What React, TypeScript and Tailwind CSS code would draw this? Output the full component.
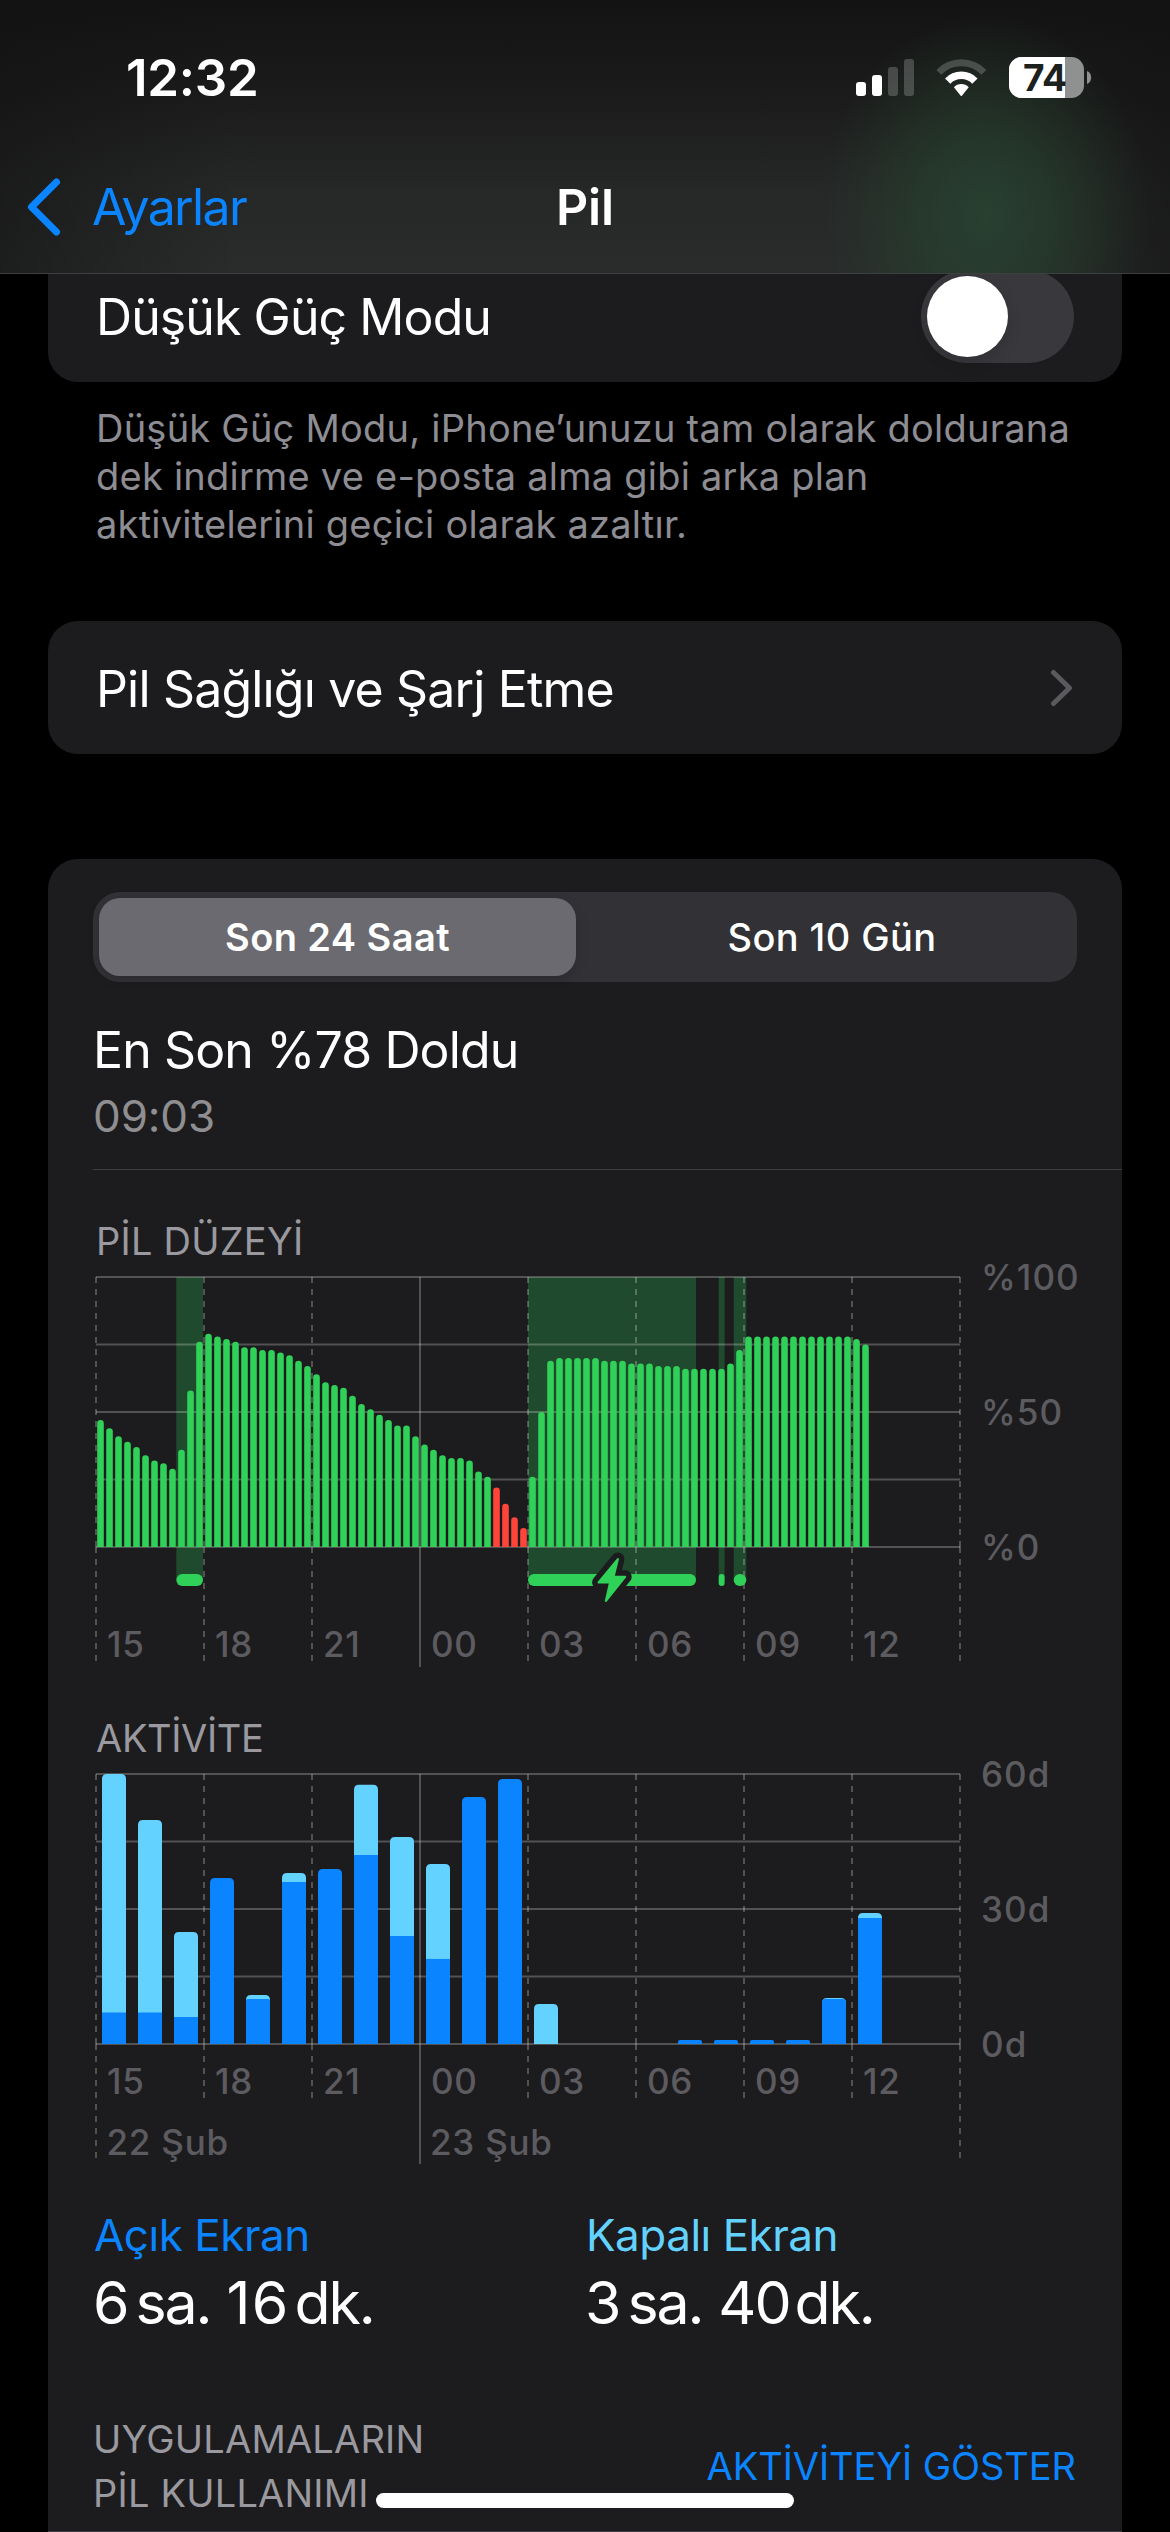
import type { ReactNode } from "react"

// Battery level per 15 minutes, starting at 15:00
const LEVELS = [
  47, 44, 41, 39, 37, 34, 32, 31, 29, 36, 58, 76,
  79, 78, 77, 76, 74, 74, 73, 73, 72, 71, 69, 67,
  64, 61, 60, 59, 56, 53, 51, 49, 47, 45, 45, 41,
  38, 36, 34, 33, 33, 32, 28, 26, 22, 16, 11, 7,
  26, 50, 69, 70, 70, 70, 70, 70, 69, 69, 69, 68,
  68, 68, 67, 67, 67, 66, 66, 66, 66, 66, 68, 73,
  78, 78, 78, 78, 78, 78, 78, 78, 78, 78, 78, 78,
  77, 75,
]
const LOW = { from: 44, to: 47 }

// Charging periods in chart pixels
const CHARGES = [
  { x: 128.3, w: 26.7 },
  { x: 480, w: 168 },
  { x: 670.7, w: 5.9 },
  { x: 685.7, w: 12.6 },
]

const BOLT = "M570 294 550.5 317.5H562L557.8 336 577.2 311.8H565.6z"

// Minutes per hour, starting at 15:00: [screen on, screen off]
const ACTIVITY = [
  [7, 53], [7, 42.8], [6, 18.9], [36.9, 0], [10, 0.9], [36, 2],
  [38.9, 0], [42, 15.6], [24, 22], [18.9, 21.1], [54.9, 0], [58.9, 0],
  [0, 8.9], [0, 0], [0, 0], [0, 0], [0.9, 0], [0.9, 0],
  [0.9, 0], [0.9, 0], [10, 0.2], [28, 1.1],
]

const HOURS = ["15", "18", "21", "00", "03", "06", "09", "12"]

const LEFT = 48
const TOP = 12
const PLOT_W = 864
const PLOT_H = 270
const BOTTOM = TOP + PLOT_H
const STEP = 108
const MIDNIGHT = 3

const LABEL = "fill-[#5c5b60] text-[35px] font-medium"

export default function App() {
  return (
    <div className="h-[2532px] w-[1170px] overflow-hidden bg-black font-['Inter','Noto_Sans',sans-serif] text-white">
      <Header />
      <main className="px-[48px]">
        <section className="-mt-[24px] flex h-[132px] items-center justify-between rounded-b-[30px] bg-[#1c1c1e] pr-[48px] pl-[48px]">
          <span className="pt-[2px] text-[50px] leading-[60px] tracking-[-0.0185em]">Düşük Güç Modu</span>
          <span className="mt-px flex h-[93px] w-[153px] items-center rounded-full bg-[#39383d] p-[6px]">
            <span className="size-[81px] rounded-full bg-white shadow-[0_6px_16px_rgba(0,0,0,0.15)]" />
          </span>
        </section>
        <p className="mt-[22px] pl-[48px] text-[38px] leading-[48px] tracking-[0.006em] whitespace-nowrap text-[#8d8d93]">
          Düşük Güç Modu, iPhone’unuzu tam olarak doldurana
          <br />
          dek indirme ve e-posta alma gibi arka plan
          <br />
          aktivitelerini geçici olarak azaltır.
        </p>

        <section className="mt-[73px] flex h-[133px] items-center justify-between rounded-[30px] bg-[#1c1c1e] pr-[49px] pl-[48px]">
          <span className="pt-[3px] text-[50px] leading-[60px] tracking-[-0.0165em]">Pil Sağlığı ve Şarj Etme</span>
          <svg className="h-[38px] w-[23px]" viewBox="0 0 23 38" fill="none">
            <path d="M3.5 3.5 19.5 19 3.5 34.5" stroke="#5a5a5e" strokeWidth="5" strokeLinecap="round" strokeLinejoin="round" />
          </svg>
        </section>

        <section className="mt-[105px] h-[1700px] rounded-t-[30px] bg-[#1c1c1e] pt-[33px]">
          <div className="mx-[45px] flex h-[90px] rounded-[27px] bg-[#323136] p-[6px] text-[38px] tracking-[0.0108em]">
            <div className="flex w-[477px] items-center justify-center rounded-[21px] bg-[#6b6a70] font-semibold shadow-[0_3px_12px_rgba(0,0,0,0.15)]">
              Son 24 Saat
            </div>
            <div className="flex flex-1 items-center justify-center pl-[17px] font-medium">Son 10 Gün</div>
          </div>
          <div className="mt-[38px] pl-[45px]">
            <h2 className="text-[50px] leading-[60px] tracking-[-0.0175em]">En Son %78 Doldu</h2>
            <p className="mt-[6px] text-[44px] leading-[60px] tracking-[-0.003em] text-[#8f8e90]">09:03</p>
          </div>
          <div className="mt-[23px] ml-[45px] h-px bg-[#3d3d41]" />

          <ChartTitle className="mt-[47px] tracking-[0.006em]">PİL DÜZEYİ</ChartTitle>
          <LevelChart />
          <ChartTitle className="mt-[37px] tracking-[-0.009em]">AKTİVİTE</ChartTitle>
          <ActivityChart />

          <div className="mt-[33px] grid grid-cols-[492px_1fr] pl-[46px]">
            <Total label="Açık Ekran" tone="text-[#0a84ff]" hours="6" minutes="16" digits="tracking-[0.02em]" />
            <Total label="Kapalı Ekran" tone="text-[#64d2ff]" hours="3" minutes="40" digits="tracking-[-0.035em]" />
          </div>

          <div className="mt-[74px] flex h-[120px] items-start justify-between border-b border-[#3d3d41] pr-[46px] pl-[45px] text-[38px] leading-[54px]">
            <p className="tracking-[0.0055em] text-[#9a999f]">
              UYGULAMALARIN
              <br />
              PİL KULLANIMI
            </p>
            <p className="mt-[27px] tracking-[-0.0018em] text-[#0a84ff]">AKTİVİTEYİ GÖSTER</p>
          </div>
        </section>
      </main>
      <div className="absolute top-[2493px] left-[376px] h-[15px] w-[418px] rounded-full bg-white" />
    </div>
  )
}

function Header() {
  return (
    <header className="relative z-10 h-[274px] border-b border-[#3e3f41] bg-[radial-gradient(165px_200px_at_985px_215px,rgba(40,68,49,0.85),rgba(38,64,46,0.6)_45%,rgba(30,50,36,0)_100%),linear-gradient(90deg,rgba(18,18,18,0.55),rgba(18,18,18,0)_20%,rgba(18,18,18,0)_84%,rgba(18,18,18,0.6)),linear-gradient(180deg,#131313,#1b1b1b_35%,#262727_70%,#2a2b2b)]">
      <div className="flex h-[142px] items-center justify-between pt-[14px] pr-[78px] pl-[126px]">
        <span className="text-[51px] leading-[60px] font-semibold tracking-[-0.005em]">12:32</span>
        <StatusIcons />
      </div>
      <div className="grid h-[131px] grid-cols-3 items-center pb-[2px] text-[50px] leading-[60px]">
        <div className="flex items-center pl-[26px] text-[#0a84ff]">
          <svg className="h-[60px] w-[36px]" viewBox="0 0 36 60" fill="none">
            <path d="M30.5 5 5.5 30 30.5 55" stroke="currentColor" strokeWidth="7" strokeLinecap="round" strokeLinejoin="round" />
          </svg>
          <span className="ml-[30px] tracking-[-0.0328em]">Ayarlar</span>
        </div>
        <h1 className="text-center font-semibold tracking-[-0.003em]">Pil</h1>
      </div>
    </header>
  )
}

function StatusIcons() {
  return (
    <svg className="h-[44px] w-[236px]" viewBox="856 56 236 44">
      <g fill="#fff">
        <rect x="856" y="82" width="10" height="14" rx="3" />
        <rect x="872" y="75" width="10" height="21" rx="3" />
        <rect x="888" y="67" width="10" height="29" rx="3" fillOpacity=".2" />
        <rect x="904" y="59" width="10" height="37" rx="3" fillOpacity=".2" />
      </g>
      <g transform="translate(961.3 94.2)">
        <path d="M-22.5-21.8A31.3 31.3 0 0 1 22.5-21.8" fill="none" stroke="#fff" strokeOpacity=".2" strokeWidth="7" />
        <path d="M-13.6-13.1A18.9 18.9 0 0 1 13.6-13.1" fill="none" stroke="#fff" strokeWidth="7.4" />
        <path d="M-7.4-6.9A10.2 10.2 0 0 1 7.4-6.9L.6 1.5Q0 2-.6 1.5Z" fill="#fff" />
      </g>
      <clipPath id="charge">
        <rect x="1009" y="57" width="75" height="41" rx="12.5" />
      </clipPath>
      <g clipPath="url(#charge)">
        <rect x="1009" y="57" width="75" height="41" fill="#8f9090" />
        <rect x="1009" y="57" width="56" height="41" fill="#fff" />
      </g>
      <path d="M1087 71c5.5 2 5.5 11 0 13z" fill="#8f9090" />
      <text x="1023" y="91" className="fill-[#1c211e] text-[37px] font-bold tracking-[-0.01em]">74</text>
    </svg>
  )
}

function ChartTitle({ className, children }: { className: string; children: ReactNode }) {
  return (
    <h3 className={`${className} pl-[48px] text-[38px] leading-[48px] text-[#9a999f]`}>{children}</h3>
  )
}

function Grid({
  hoursEnd,
  edgeEnd,
  solidEnd,
  yLabels,
}: {
  hoursEnd: number
  edgeEnd: number
  solidEnd: number
  yLabels: string[]
}) {
  return (
    <>
      <g stroke="#fff" strokeOpacity=".24" strokeWidth="2">
        {HOURS.concat("end").map((hour, i) => {
          const x = LEFT + i * STEP
          if (i === MIDNIGHT) return <path key={hour} d={`M${x} ${TOP}V${solidEnd}`} />
          const end = i === 0 || i === HOURS.length ? edgeEnd : hoursEnd
          return (
            <path key={hour} strokeDasharray="6 6" d={`M${x} ${TOP}V${BOTTOM}M${x} ${BOTTOM}V${end}`} />
          )
        })}
      </g>
      {yLabels.map((label, i) => (
        <text key={label} x={LEFT + PLOT_W + 21} y={TOP + 13 + i * 135} className={`${LABEL} tracking-[0.03em]`}>
          {label}
        </text>
      ))}
    </>
  )
}

function HorizontalLines() {
  return (
    <g stroke="#fff" strokeOpacity=".24" strokeWidth="2">
      {[0, 1, 2, 3, 4].map((i) => (
        <path key={i} d={`M${LEFT} ${TOP + i * 67.5}h${PLOT_W}`} />
      ))}
    </g>
  )
}

function HourLabels({ y }: { y: number }) {
  return (
    <>
      {HOURS.map((hour, i) => (
        <text key={hour} x={LEFT + i * STEP + 11} y={y} className={`${LABEL} tracking-[0.02em]`}>
          {hour}
        </text>
      ))}
    </>
  )
}

function LevelChart() {
  return (
    <svg className="block h-[412px] w-[1074px] overflow-visible" viewBox="0 0 1074 412">
      {CHARGES.map(({ x, w }) => (
        <rect key={x} x={x} y={TOP} width={w} height={303} fill="#30d158" fillOpacity=".26" />
      ))}
      <HorizontalLines />
      {LEVELS.map((level, i) => {
        const x = LEFT + 1.2 + i * 9
        const y = BOTTOM - level * 2.7
        const low = i >= LOW.from && i <= LOW.to
        return (
          <path
            key={i}
            d={`M${x} ${BOTTOM}V${y + 3.3}a3.3 3.3 0 0 1 6.6 0V${BOTTOM}z`}
            fill={low ? "#ff453a" : "#30d158"}
          />
        )
      })}
      <Grid hoursEnd={396} edgeEnd={396} solidEnd={402} yLabels={["%100", "%50", "%0"]} />
      {CHARGES.map(({ x, w }) => (
        <rect key={x} x={x} y={309} width={w} height={12} rx={Math.min(6, w / 2)} fill="#30d158" />
      ))}
      <g strokeLinejoin="round">
        <path d={BOLT} fill="#1c1c1e" stroke="#1c1c1e" strokeWidth="13" />
        <path d={BOLT} fill="#30d158" stroke="#30d158" strokeWidth="2" />
      </g>
      <HourLabels y={392} />
    </svg>
  )
}

function ActivityChart() {
  return (
    <svg className="block h-[412px] w-[1074px] overflow-visible" viewBox="0 0 1074 412">
      <HorizontalLines />
      <Grid hoursEnd={336} edgeEnd={396} solidEnd={402} yLabels={["60d", "30d", "0d"]} />
      {ACTIVITY.map(([on, off], i) => {
        const x = LEFT + 6 + i * 36
        const total = (on + off) * 4.5
        if (total === 0) return null
        const r = Math.min(5, total / 2)
        const top = BOTTOM - total
        return (
          <g key={i}>
            <path
              d={`M${x} ${BOTTOM}V${top + r}q0 ${-r} ${r} ${-r}h${24 - 2 * r}q${r} 0 ${r} ${r}V${BOTTOM}z`}
              fill={off > 0 ? "#64d2ff" : "#0a84ff"}
            />
            {off > 1 && on > 0 && <rect x={x} y={BOTTOM - on * 4.5} width="24" height={on * 4.5} fill="#0a84ff" />}
            {off > 0 && off <= 1 && (
              <path
                d={`M${x} ${BOTTOM}V${top + 5}q0 ${off * 4.5 - 5} 3 ${off * 4.5 - 5}h18q3 0 3 ${5 - off * 4.5}V${BOTTOM}z`}
                fill="#0a84ff"
              />
            )}
          </g>
        )
      })}
      <HourLabels y={332} />
      <text x={LEFT + 10.5} y={393} className={`${LABEL} tracking-[0.022em]`}>22 Şub</text>
      <text x={LEFT + MIDNIGHT * STEP + 10} y={393} className={`${LABEL} tracking-[0.022em]`}>23 Şub</text>
    </svg>
  )
}

function Total({
  label,
  tone,
  hours,
  minutes,
  digits,
}: {
  label: string
  tone: string
  hours: string
  minutes: string
  digits: string
}) {
  return (
    <div>
      <p className={`${tone} text-[44px] leading-[56px] tracking-[-0.011em]`}>{label}</p>
      <p className="-ml-px mt-[5px] text-[59px] leading-[70px]">
        {hours}
        <span className="ml-[6px] tracking-[-0.036em]">sa.</span>
        <span className={`ml-[16px] ${digits}`}>{minutes}</span>
        <span className="ml-[5px] tracking-[-0.036em]">dk.</span>
      </p>
    </div>
  )
}
